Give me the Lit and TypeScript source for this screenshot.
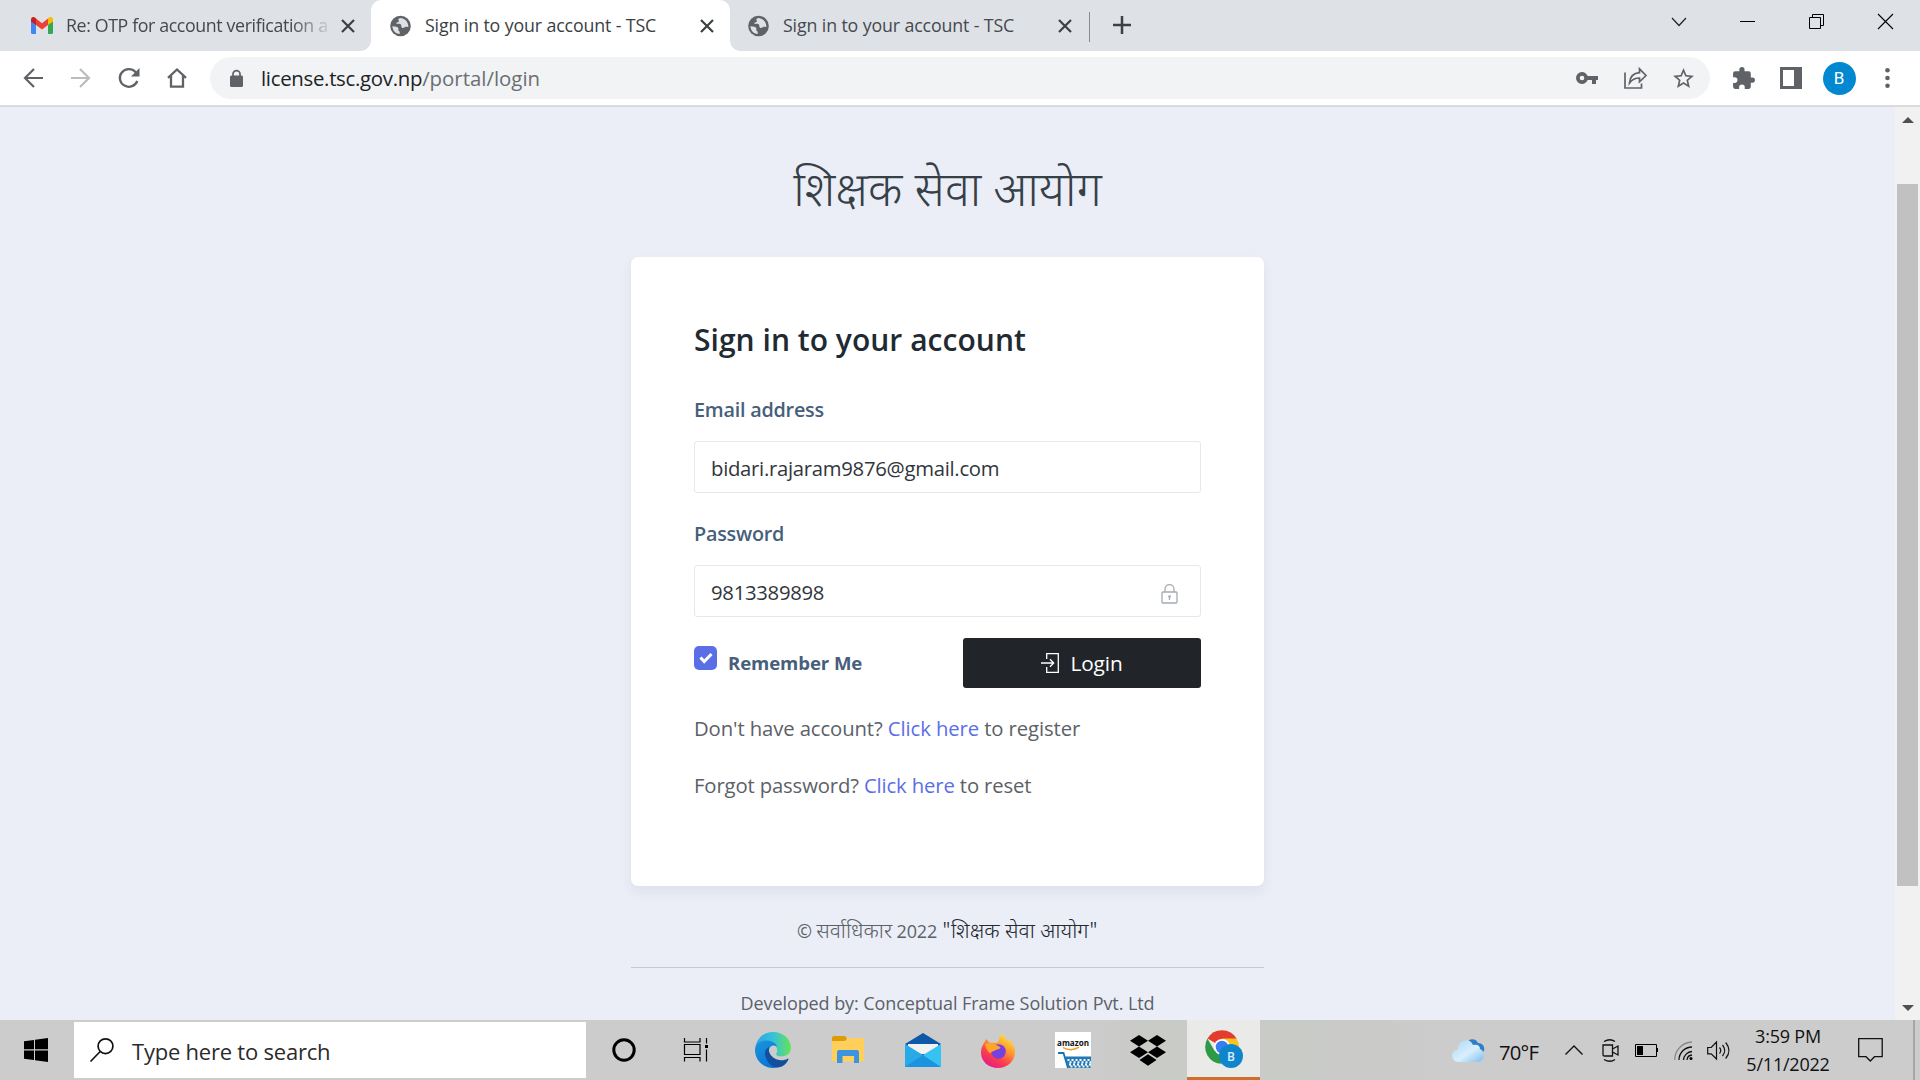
import { LitElement, html, css, svg } from "lit";
import { customElement } from "lit/decorators.js";

const sheet = css`
  :host, *, *::before, *::after { box-sizing: border-box; }
  svg { display: block; flex: none; overflow: visible; }
`;

const closeX = html`<svg width="14" height="14" viewBox="0 0 14 14"><path d="M1 1l12 12M13 1L1 13" stroke="#3c4043" stroke-width="2.2" fill="none"/></svg>`;

const globe = html`<svg width="21" height="22" viewBox="0 0 22 22"><circle cx="11" cy="11" r="10.8" fill="#5f6368"/><path d="M11.5 2.6C8 3 8.2 5 9.6 5.400c-.2 1.600-3 1.500-3.200 3.200c1.600 .5 4.200-.6 5.200 1.200c.6 1.600-.2 2.600 1.300 3.200c1.700 .3 2.400-1.600 4.200-1.300l2.200 .4c0-4.600-2.700-8.600-7.800-9.500z" fill="#dee1e6"/><path d="M2.600 11c1.500 .8 4.500 .3 6 1.800c.8 1.200-.6 2.300 .5 3.300c1 .6 1.300 1.300 1 3.300C5.600 19 2.500 15.500 2.600 11z" fill="#dee1e6"/></svg>`;

@customElement("browser-tabs")
class BrowserTabs extends LitElement {
  static styles = [sheet, css`
    :host { display: flex; height: 51px; background: #dee1e6; font: 17.8px/26px "Open Sans", "Noto Sans", sans-serif; color: #45494d; }
    .tab { display: flex; align-items: center; position: relative; height: 51px; }
    .first { width: 371px; padding-left: 31px; }
    .active { width: 359px; padding-left: 19px; background: #fff; border-radius: 10px 10px 0 0; color: #3c4043; }
    .active::before, .active::after { content: ""; position: absolute; bottom: 0; width: 10px; height: 10px; }
    .active::before { left: -10px; background: radial-gradient(circle at 0 0, transparent 9.5px, #fff 10px); }
    .active::after { right: -10px; background: radial-gradient(circle at 100% 0, transparent 9.5px, #fff 10px); }
    .third { width: 359px; padding-left: 18px; }
    .label { white-space: nowrap; overflow: hidden; margin: -1px 0 0 14px; width: 275px; letter-spacing: -0.13px; }
    .first .label { width: 262px; margin: -1px 13px 0 13px; letter-spacing: -0.38px; -webkit-mask-image: linear-gradient(90deg, #000 225px, transparent 268px); }
    .divider { width: 1px; height: 30px; background: #888c91; margin: 12px 23px 0 0; }
    .plus { margin-top: 16px; }
    .grow { flex: 1; }
    .win { width: 69px; height: 43px; display: grid; place-items: center; }
  `];
  render() {
    return html`
      <div class="tab first">
        <svg width="22" height="17" viewBox="0 0 22 17"><path d="M0 3v12.500Q0 17 1.500 17H5V7z" fill="#4285f4"/><path d="M22 3v12.500Q22 17 20.500 17H17V7z" fill="#34a853"/><path d="M17 2v6l5-3.500V2.500C22-.2 19.200-.8 17 1z" fill="#fbbc04"/><path d="M5 8V1.600L11 6.200L17 1.600V8l-6 4.600z" fill="#ea4335"/><path d="M0 2.500v2L5 8V1.400C2.800-.8 0-.2 0 2.500z" fill="#c5221f"/></svg>
        <span class="label">Re: OTP for account verification a</span>${closeX}
      </div>
      <div class="tab active">${globe}<span class="label">Sign in to your account - TSC</span>${closeX}</div>
      <div class="tab third">${globe}<span class="label">Sign in to your account - TSC</span>${closeX}</div>
      <div class="divider"></div>
      <svg class="plus" width="18" height="18" viewBox="0 0 18 18"><path d="M9 0v18M0 9h18" stroke="#3c4043" stroke-width="2.500"/></svg>
      <div class="grow"></div>
      <div class="win"><svg width="16" height="10" viewBox="0 0 16 10"><path d="M1 1l7 7.500L15 1" fill="none" stroke="#222" stroke-width="1.200"/></svg></div>
      <div class="win"><svg width="15" height="1"><rect width="15" height="1"/></svg></div>
      <div class="win"><svg width="15" height="15" viewBox="0 0 15 15"><path d="M.5 3.500h11v11H.5zM3.500 3V.5h11v11H12" fill="none" stroke="#000"/></svg></div>
      <div class="win"><svg width="15" height="15" viewBox="0 0 15 15"><path d="M0 0l15 15M15 0L0 15" stroke="#000" stroke-width="1.100"/></svg></div>
    `;
  }
}

@customElement("browser-toolbar")
class BrowserToolbar extends LitElement {
  static styles = [sheet, css`
    :host { display: flex; align-items: center; height: 56px; padding: 0 9px; background: #fff; border-bottom: 2px solid #d9dbde; font: 20.4px/30px "Open Sans", "Noto Sans", sans-serif; color: #5f6368; }
    .cell { width: 48px; height: 42px; display: grid; place-items: center; flex: none; }
    .box { flex: 1; display: flex; align-items: center; height: 42px; margin: 0 9px; padding: 0 3px 0 20px; border-radius: 21px; background: #f1f3f4; }
    .url { flex: 1; margin-left: 18px; color: #6a6e72; white-space: nowrap; }
    .host { color: #202124; letter-spacing: -0.3px; }
    .avatar { width: 33px; height: 33px; border-radius: 50%; background: #0288d1; color: #fff; display: grid; place-items: center; font: 17px/33px Roboto, sans-serif; }
  `];
  render() {
    const arrow = svg`<path d="M20 10H2M11 1L2 10l9 9" fill="none" stroke="currentColor" stroke-width="2.200"/>`;
    return html`
      <div class="cell"><svg width="20" height="20" viewBox="0 0 20 20">${arrow}</svg></div>
      <div class="cell"><svg width="20" height="20" viewBox="0 0 20 20" color="#babcbe"><g transform="matrix(-1 0 0 1 20 0)">${arrow}</g></svg></div>
      <div class="cell"><svg width="21" height="20" viewBox="0 0 21 20"><path d="M18.300 13A9 8.800 0 1 1 16.500 4L19 6.500" fill="none" stroke="currentColor" stroke-width="2.300"/><path d="M20.500 0v8.600H12z" fill="currentColor"/></svg></div>
      <div class="cell"><svg width="20" height="20" viewBox="0 0 20 20"><path d="M1 9.800L10 1.500l9 8.300M4 8v10.600h12V8" fill="none" stroke="currentColor" stroke-width="2.300"/></svg></div>
      <div class="box">
        <svg width="13" height="17" viewBox="0 0 13 17"><rect y="5.500" width="13" height="11.500" rx="1.500" fill="currentColor"/><path d="M3 6V4a3.500 3.300 0 0 1 7 0v2" fill="none" stroke="currentColor" stroke-width="1.700"/></svg>
        <span class="url"><span class="host">license.tsc.gov.np</span>/portal/login</span>
        <div class="cell"><svg width="22" height="12" viewBox="0 0 22 12"><path fill="currentColor" fill-rule="evenodd" d="M11.650 4C10.830 1.670 8.610 0 6 0a6 6 0 0 0 0 12c2.610 0 4.830-1.670 5.650-4H16v4h4V8h2V4zM6 8.300a2.300 2.300 0 1 1 0-4.600a2.300 2.300 0 0 1 0 4.600z"/></svg></div>
        <div class="cell"><svg width="23" height="22" viewBox="0 0 23 22"><path d="M1 5.500V21h16.500v-4.500M5.500 16C6 10 9 6 15.500 5.600V1.800L22 8.500l-6.500 6.300V11C11 11 8 12.500 5.500 16z" fill="none" stroke="currentColor" stroke-width="1.700"/></svg></div>
        <div class="cell"><svg width="25" height="25" viewBox="0 0 24 24"><path fill="currentColor" d="M22 9.240l-7.190-.62L12 2 9.190 8.630 2 9.240l5.460 4.730L5.820 21 12 17.270 18.180 21l-1.630-7.030zM12 15.400l-3.760 2.270 1-4.280-3.320-2.880 4.380-.38L12 6.100l1.710 4.040 4.380 .38-3.320 2.880 1 4.280z"/></svg></div>
      </div>
      <div class="cell"><svg width="25" height="25" viewBox="0 0 24 24"><path fill="currentColor" d="M20.500 11H19V7a2 2 0 0 0-2-2h-4V3.500a2.500 2.500 0 0 0-5 0V5H4a2 2 0 0 0-2 2v3.800h1.500a2.700 2.700 0 0 1 0 5.400H2V20a2 2 0 0 0 2 2h3.800v-1.500a2.700 2.700 0 0 1 5.400 0V22H17a2 2 0 0 0 2-2v-4h1.500a2.500 2.500 0 0 0 0-5z"/></svg></div>
      <div class="cell"><svg width="22" height="22" viewBox="0 0 22 22"><path fill="currentColor" fill-rule="evenodd" d="M0 0h22v22H0zM3 3v16h11V3z"/></svg></div>
      <div class="cell"><span class="avatar">B</span></div>
      <div class="cell"><svg width="5" height="20" viewBox="0 0 5 20"><g fill="currentColor"><circle cx="2.500" cy="2.300" r="2.300"/><circle cx="2.500" cy="10" r="2.300"/><circle cx="2.500" cy="17.700" r="2.300"/></g></svg></div>
    `;
  }
}

@customElement("login-page")
class LoginPage extends LitElement {
  static styles = [sheet, css`
    :host { display: flex; height: 913px; overflow: hidden; background: #ebeef7; font: 20.3px/30px "Open Sans", "Noto Sans", sans-serif; color: #5b6167; }
    .page { flex: 1; display: flex; flex-direction: column; align-items: center; }
    .brand { margin: 55px 0 0; height: 60px; font: 300 47.3px/66px "Noto Sans Devanagari", "Open Sans", sans-serif; color: #364047; white-space: nowrap; }
    .card { width: 633px; height: 629px; margin-top: 35px; padding: 63px 63px 0; background: #fff; border-radius: 7px; box-shadow: 0 6px 12px rgba(40, 50, 90, .07); display: flex; flex-direction: column; flex: none; }
    h2 { margin: 0; font-size: 30px; line-height: 40px; font-weight: 600; letter-spacing: 0.03px; color: #1f2a33; white-space: nowrap; }
    label { font-weight: 600; font-size: 19.800px; color: #475f7b; white-space: nowrap; letter-spacing: -0.23px; }
    .lab1 { margin-top: 35px; }
    .lab2 { margin-top: 26px; }
    .field { display: flex; align-items: center; height: 52px; margin-top: 16px; border: 1px solid #e6e8eb; border-radius: 3px; padding: 2px 22px 0 16px; }
    .padlock { margin-top: 4px; }
    input { flex: 1; border: 0; outline: 0; padding: 0; height: 40px; background: none; font: inherit; color: #30363c; letter-spacing: -0.28px; }
    .actions { display: flex; align-items: flex-start; margin-top: 21px; height: 50px; }
    .check { width: 23px; height: 24px; margin-top: 8px; border-radius: 5px; background: #5a6fe6; display: grid; place-items: center; }
    .remember { margin: 10px 0 0 11px; flex: 1; font-weight: 700; font-size: 18.600px; letter-spacing: -0.1px; }
    button { width: 238px; height: 50px; border: 0; border-radius: 3px; background: #212529; color: #fff; font: 20.800px/30px "Open Sans", sans-serif; display: flex; align-items: center; justify-content: center; gap: 11px; padding: 0; letter-spacing: -0.1px; }
    p { margin: 0; white-space: nowrap; letter-spacing: -0.1px; }
    .reg { margin-top: 25px; }
    .forgot { margin-top: 27px; letter-spacing: -0.14px; }
    .link { color: #5a6fe6; }
    .copy { margin-top: 30px; font: 18px/30px "Open Sans", sans-serif; letter-spacing: -0.2px; }
    .deva { font: 300 21.100px/30px "Noto Sans Devanagari", "Open Sans", sans-serif; letter-spacing: 0; }
    .org { color: #23292f; }
    .rule { width: 633px; height: 1px; flex: none; background: #c5c9d2; margin-top: auto; }
    .dev { margin-top: 20px; font-size: 18px; letter-spacing: -0.08px; flex: none; }
    .tail { height: 2px; flex: none; }
    .bar { width: 25px; background: #f1f1f1; display: flex; flex-direction: column; align-items: center; padding: 10px 0 9px; }
    .thumb { width: 21px; height: 702px; background: #c1c1c1; margin-top: 61px; }
    .down { margin-top: auto; }
  `];
  render() {
    return html`
      <div class="page">
        <h1 class="brand">शिक्षक सेवा आयोग</h1>
        <div class="card">
          <h2>Sign in to your account</h2>
          <label class="lab1">Email address</label>
          <div class="field"><input class="value" value="bidari.rajaram9876@gmail.com"></div>
          <label class="lab2">Password</label>
          <div class="field"><input class="value" value="9813389898">
            <svg class="padlock" width="17" height="20" viewBox="0 0 17 20"><g fill="none" stroke="#a3abb2" stroke-width="1.300"><rect x="1" y="8" width="15" height="11" rx="1"/><path d="M4 8V5a4.500 4.400 0 0 1 9 0v3M8.500 12.500V16"/></g><circle cx="8.500" cy="12.500" r="1.300" fill="#a3abb2"/></svg>
          </div>
          <div class="actions">
            <span class="check"><svg width="14" height="12" viewBox="0 0 14 12"><path d="M1.500 5.500L5.200 9.500L12.500 2" fill="none" stroke="#fff" stroke-width="3"/></svg></span>
            <label class="remember">Remember Me</label>
            <button><svg width="18" height="20" viewBox="0 0 18 20"><path d="M5.700 6V.7H17.300v18.600H5.700V14M0 10h12.500M9 6.300L12.700 10L9 13.700" fill="none" stroke="#fff" stroke-width="1.300"/></svg>Login</button>
          </div>
          <p class="reg">Don't have account? <span class="link">Click here</span> to register</p>
          <p class="forgot">Forgot password? <span class="link">Click here</span> to reset</p>
        </div>
        <p class="copy">© <span class="deva">सर्वाधिकार</span> 2022 <span class="deva org">"शिक्षक सेवा आयोग"</span></p>
        <div class="rule"></div>
        <p class="dev">Developed by: Conceptual Frame Solution Pvt. Ltd</p>
        <div class="tail"></div>
      </div>
      <div class="bar">
        <svg width="12" height="6" viewBox="0 0 12 6"><path d="M6 0l6 6H0z" fill="#505050"/></svg>
        <div class="thumb"></div>
        <svg class="down" width="12" height="6" viewBox="0 0 12 6"><path d="M6 6l6-6H0z" fill="#505050"/></svg>
      </div>
    `;
  }
}

@customElement("task-bar")
class TaskBar extends LitElement {
  static styles = [sheet, css`
    :host { display: flex; height: 60px; background: linear-gradient(90deg, #ccc 1090px, #c9cbc7 1150px, #c9cbc7 1280px, #cacbc9 1380px, #ccc 1440px); font: 18px/28px "Open Sans", "Noto Sans", sans-serif; color: #111; }
    .start { width: 74px; display: flex; align-items: center; padding: 0 0 0 24px; }
    .search { width: 512px; height: 56px; margin-top: 2px; background: #fff; display: flex; align-items: center; padding-left: 16px; font-size: 22px; letter-spacing: -0.22px; color: #2b2b2b; }
    .hint { margin: 2px 0 0 18px; white-space: nowrap; }
    .apps { display: flex; margin-left: 1px; gap: 2px; }
    .app { width: 73px; height: 60px; display: grid; place-items: center; padding-right: 1px; }
    .ring { padding-right: 0; }
    .views { padding-right: 5px; }
    .current { background: #eaebe9; border-bottom: 3px solid #cf6f2b; }
    .tray { flex: 1; display: flex; align-items: center; padding-left: 192px; }
    .temp { width: 66px; margin: 3px 0 0 14px; font-size: 20.300px; letter-spacing: -0.8px; }
    .chev { margin-right: 19px; }
    .cam { margin-right: 16px; }
    .bat { margin-right: 16px; }
    .wifi { margin-right: 14px; }
    .clock { width: 100px; margin: 0 1px 0 8px; text-align: center; letter-spacing: -0.22px; white-space: nowrap; }
    .note { margin-left: 19px; }
    .edge { width: 2px; height: 60px; background: #a6a6a6; margin-left: 30px; }
    .wrap { font: 700 9px/10px "Open Sans", sans-serif; }
  `];
  render() {
    return html`
      <div class="start"><svg width="24" height="24" viewBox="0 0 24 24"><path d="M0 3.200L10 1.900V11.300H0zM11 1.700L24 0v11.300H11zM0 12.400h10v9.500L0 20.700zM11 12.400h13V24l-13-1.800z"/></svg></div>
      <div class="search"><svg width="24" height="24" viewBox="0 0 24 24"><circle cx="15.500" cy="8.200" r="7.400" fill="none" stroke="#111" stroke-width="1.700"/><path d="M10.200 13.500L.5 23.500" stroke="#111" stroke-width="1.700"/></svg><span class="hint">Type here to search</span></div>
      <div class="apps">
        <div class="app ring"><svg width="24" height="24" viewBox="0 0 24 24"><circle cx="12" cy="12" r="10.200" fill="none" stroke="#000" stroke-width="3"/></svg></div>
        <div class="app views"><svg width="26" height="24" viewBox="0 0 26 24"><path d="M1.500 0v4h15.500V0M1.500 6.500h15.500v10H1.500zM1.500 23.500v-4h15.500v4M23.500 0v5.500M23.500 11.500v12" fill="none" stroke="#000" stroke-width="1.200"/><rect x="22" y="7" width="3" height="3"/></svg></div>
        <div class="app"><svg width="36" height="36" viewBox="0 0 36 36">
          <defs><linearGradient id="ea" x1="0" y1=".5" x2="1" y2=".5"><stop offset="0" stop-color="#2aa5e8"/><stop offset=".5" stop-color="#35c1d8"/><stop offset="1" stop-color="#66e455"/></linearGradient><linearGradient id="eb" x1="0" y1="0" x2=".6" y2="1"><stop offset="0" stop-color="#1c94dc"/><stop offset="1" stop-color="#0a73d4"/></linearGradient></defs>
          <path d="M.5 15C2 6 9 0 18 0c10 0 18 7 18 15.500c0 6-4.500 8.800-9.500 8.800c-4 0-6-1.300-5.200-2.800c1.800-3 1-6.500-2-8C13 9.500 5 9 .5 15z" fill="url(#ea)"/>
          <path d="M0 18C0 12 5 8.500 11 8.500c5.500 0 10 2.500 11 6c-4-2.500-8 0-8 4.500C14 27 20 35 27 33c-3 2-6 3-9 3C8 36 0 28 0 18z" fill="url(#eb)"/>
          <path d="M14.500 15C10 16.500 9 21 11 26c2 5.500 6.500 9.500 11.500 9.500c5 0 9.500-4 11-8.200c.3-.8-.3-.9-1-.5c-2 1.200-4.500 1.700-7 1.400c-6.500-.7-10-4.500-11.400-8.500c-.5-2-.3-4 .4-5z" fill="#124f9c"/></svg></div>
        <div class="app"><svg width="32" height="28" viewBox="0 0 32 28"><path d="M0 2q0-2 2-2h11l3 3.500V8H0z" fill="#dd9b06"/><path d="M0 5h13l2.500-3H30q2 0 2 2v20q0 1.500-2 1.500H2q-2 0-2-1.500z" fill="#fecf5b"/><path d="M5 27V16q0-2 2-2h18q2 0 2 2v11h-5v-7H10.500v7z" fill="#3b94dd"/></svg></div>
        <div class="app"><svg width="36" height="34" viewBox="0 0 36 34"><path d="M0 11L18 0l18 11-18 12z" fill="#0f58a8"/><path d="M3 11h30v10H3z" fill="#f2f2f2"/><path d="M0 11v23h36L18 22z" fill="#2aa9e8"/><path d="M36 11v23L18 22z" fill="#35c3f3"/><path d="M0 34h36L18 22z" fill="#1b94e0"/></svg></div>
        <div class="app"><svg width="34" height="35" viewBox="0 0 34 35">
          <defs><linearGradient id="fx" x1=".85" y1="0" x2=".25" y2="1"><stop offset="0" stop-color="#fff04e"/><stop offset=".4" stop-color="#ff9a2d"/><stop offset=".7" stop-color="#fb3f4c"/><stop offset="1" stop-color="#e5178c"/></linearGradient></defs>
          <path d="M21.500 0c1 4 4 6 6 8.500c.5-1 .4-1.500 .2-2.500c4.500 4 6.300 9 6.300 13c0 9-7.500 16-17 16S0 28.500 0 19.500C0 15 1.500 12 3.500 9.500L5 6c1.500 1.500 2.500 3 4 4c1-.5 3-.5 5 0c3 0 4-2 4.500-5c.2-2 1.500-3.500 3-5z" fill="url(#fx)"/><circle cx="17.500" cy="18.500" r="7.300" fill="#7541e0"/><path d="M4 11c3-1 7-1.500 10 .2c2 1.300 5 2 5.500 3.300c-.5 2-4 1.500-5.500 3c-1.500 1.200-3.500 .5-4.500 3C6 18 4.500 14 4 11z" fill="#ffa32a"/></svg></div>
        <div class="app"><svg class="wrap" width="36" height="36" viewBox="0 0 36 36"><rect width="36" height="36" fill="#fff"/><text x="18" y="13.500" text-anchor="middle" textLength="32" lengthAdjust="spacingAndGlyphs" fill="#111">amazon</text><path d="M8 15.500q8 4.500 16-.3" fill="none" stroke="#f79a1e" stroke-width="1.400"/><path d="M3 21h5.500L13 36" fill="none" stroke="#1a73ae" stroke-width="1.800"/><path d="M10 24.500h26V36H13.500z" fill="#2379b5"/><g fill="none" stroke="#fff" stroke-width="2" stroke-dasharray="2 2"><path d="M12.500 28H36M14.500 30.200H36M14 32.400H36M15.500 34.600H36"/></g></svg></div>
        <div class="app"><svg width="36" height="31" viewBox="0 0 36 31"><path d="M9 0l9 5.700-9 5.700L0 5.700zM27 0l9 5.700-9 5.700-9-5.700zM9 11.600l9 5.700-9 5.700-9-5.700zM27 11.600l9 5.700-9 5.700-9-5.700zM18 19.300l8.500 5.700-8.500 5.700L9.500 25z"/></svg></div>
        <div class="app current"><svg width="38" height="38" viewBox="0 0 38 38"><g transform="translate(1 0)"><path d="M17 17L2.500 8.500A16.800 16.800 0 0 1 31.600 8.600z" fill="#e33b2e"/><path d="M17 17V8.600h14.600A16.800 16.800 0 0 1 17 33.800L24 21z" fill="#fcc31e"/><path d="M17 17l7 4-7.500 12.800A16.800 16.800 0 0 1 2.400 8.600L9.700 21z" fill="#2d9b46"/><circle cx="17" cy="17" r="8" fill="#fff"/><circle cx="17" cy="17" r="6.300" fill="#3a7df0"/></g><circle cx="27" cy="26" r="12" fill="#0f86cc"/><text x="27" y="30.500" font-family="Roboto, sans-serif" font-size="12" font-weight="500" text-anchor="middle" fill="#d8efff">B</text></svg></div>
      </div>
      <div class="tray">
        <svg width="33" height="23" viewBox="0 0 33 23"><defs><linearGradient id="cl" x1="0" y1="0" x2="1" y2="1"><stop offset="0" stop-color="#a9d8f6"/><stop offset=".55" stop-color="#d9effc"/><stop offset="1" stop-color="#7fbcec"/></linearGradient></defs><path d="M17 1c4-2 8 0 9 3c5 0 7 4 6 8l-5 4-11-8z" fill="#2f7fc6"/><path d="M7 23c-9 0-9-12-1-12.500C5 2 17-3 21 6c5-1 7 1 7 4c6 2 5 13-2 13z" fill="url(#cl)"/></svg>
        <span class="temp">70°F</span>
        <svg class="chev" width="18" height="10" viewBox="0 0 18 10"><path d="M.5 9.500L9 1l8.500 8.500" fill="none" stroke="#111" stroke-width="1.400"/></svg>
        <svg class="cam" width="17" height="23" viewBox="0 0 17 23"><path d="M2 2.500q6-3.500 11 0M2 20.500q6 3.500 11 0M1 6h9.500v11H2.500q-1.500 0-1.500-1.500zM10.500 10l5.500-3v9l-5.500-3" fill="none" stroke="#111" stroke-width="1.300"/></svg>
        <svg class="bat" width="23" height="13" viewBox="0 0 23 13"><path d="M.5 .5h21v12H.5z" fill="none" stroke="#000"/><path d="M2 2h6v9H2zM22 4h1v4h-1z"/></svg>
        <svg class="wifi" width="19" height="19" viewBox="0 0 19 19"><g fill="none" stroke="#111" stroke-width="1.300"><path d="M.7 19A18 18 0 0 1 18 1" stroke="#888"/><path d="M5 19A13 13 0 0 1 18 6M9.500 19A9 9 0 0 1 18 10.500M13 19A5.500 5.500 0 0 1 18 14"/></g><circle cx="17" cy="17.500" r="1.500"/></svg>
        <svg width="23" height="19" viewBox="0 0 23 19"><path d="M.7 6.500h3.500L9.500 1v17L4.200 12.800H.7zM12.500 6.500q2.500 3 0 6M15.500 4q4.500 5.500 0 11M18.700 1.500q6.500 8 0 16" fill="none" stroke="#111" stroke-width="1.200"/></svg>
        <div class="clock"><div>3:59 PM</div><div>5/11/2022</div></div>
        <svg class="note" width="25" height="25" viewBox="0 0 25 25"><path d="M.7 .7h23.500v18H16.500l-4.200 4.300L8 18.700H.7z" fill="none" stroke="#111" stroke-width="1.300"/></svg>
        <div class="edge"></div>
      </div>
    `;
  }
}

@customElement("app-root")
class AppRoot extends LitElement {
  static styles = css`
    :host { display: block; width: 1920px; height: 1080px; overflow: hidden; }
  `;
  render() {
    return html`<browser-tabs></browser-tabs><browser-toolbar></browser-toolbar><login-page></login-page><task-bar></task-bar>`;
  }
}
